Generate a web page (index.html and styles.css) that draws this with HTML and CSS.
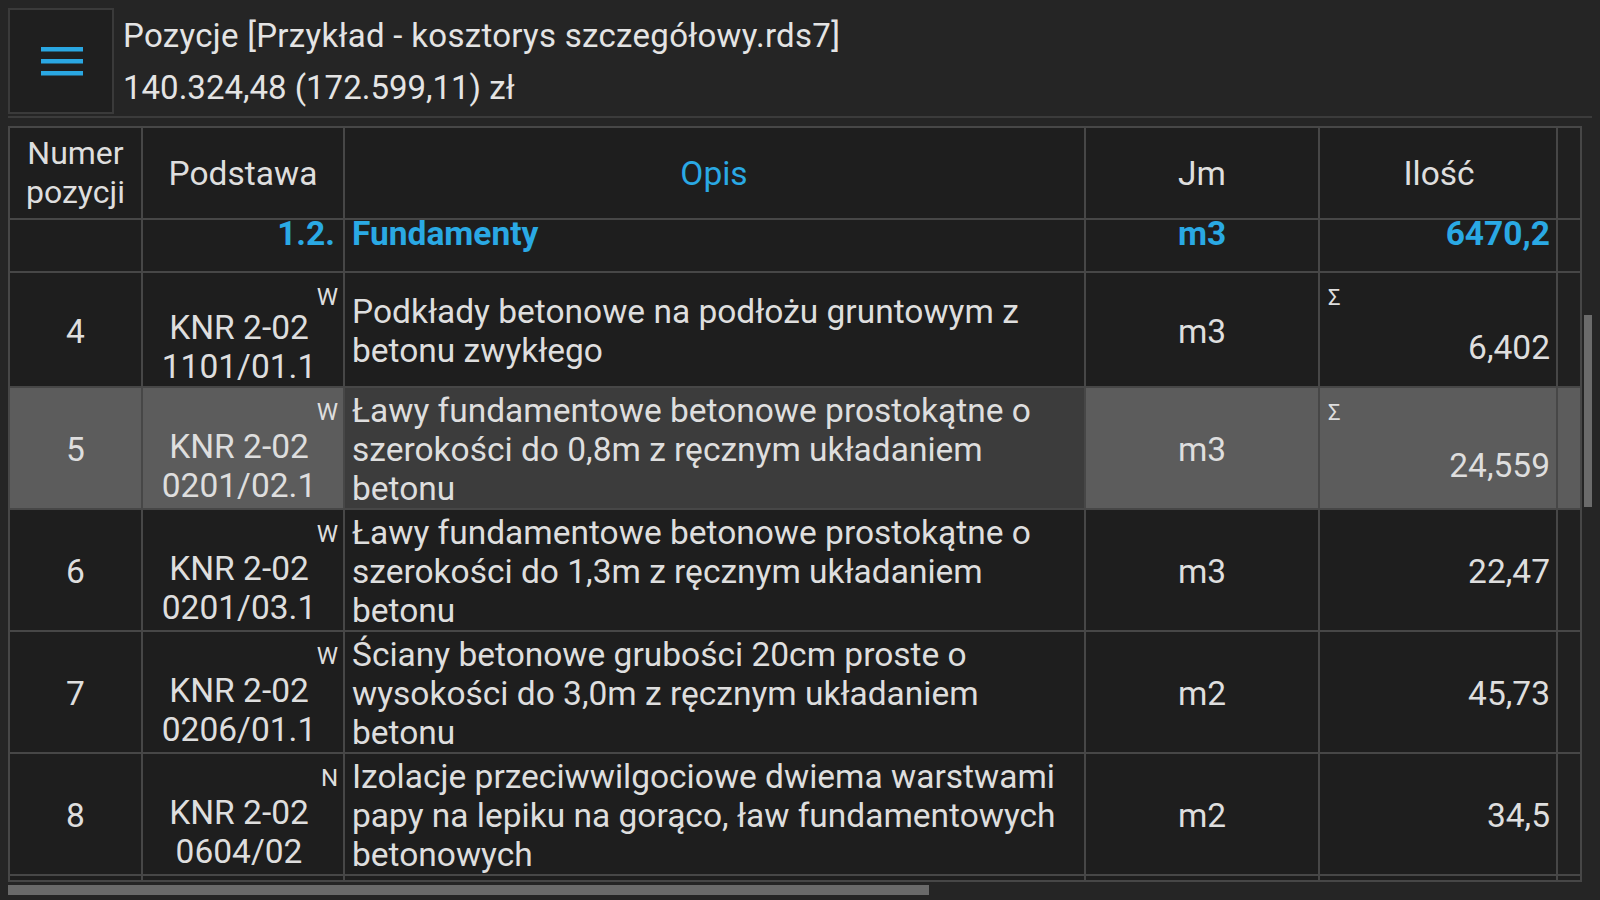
FILE: index.html
```html
<!DOCTYPE html>
<html lang="pl">
<head>
<meta charset="utf-8">
<title>Pozycje</title>
<link rel="stylesheet" href="styles.css">
</head>
<body>
<div class="screen">
  <header class="topbar">
    <div class="menu-btn">
      <svg width="44" height="34" viewBox="0 0 44 34">
        <rect x="1" y="3" width="42" height="4.5" fill="#2aa7e2"/>
        <rect x="1" y="15" width="42" height="4.5" fill="#2aa7e2"/>
        <rect x="1" y="27" width="42" height="4.5" fill="#2aa7e2"/>
      </svg>
    </div>
    <div class="title">
      <div class="title-line first">Pozycje [Przykład - kosztorys szczegółowy.rds7]</div>
      <div class="title-line second">140.324,48 (172.599,11) zł</div>
    </div>
  </header>

  <div class="table-wrap">
    <div class="table">
      <div class="row head">
        <div class="cell c-num">Numer<br>pozycji</div>
        <div class="cell c-base center">Podstawa</div>
        <div class="cell c-desc center blue">Opis</div>
        <div class="cell c-jm center">Jm</div>
        <div class="cell c-qty center">Ilość</div>
        <div class="cell c-pad"></div>
      </div>

      <div class="row group">
        <div class="cell c-num"></div>
        <div class="cell c-base right blue bold">1.2.</div>
        <div class="cell c-desc blue bold">Fundamenty</div>
        <div class="cell c-jm center blue bold">m3</div>
        <div class="cell c-qty right blue bold">6470,2</div>
        <div class="cell c-pad"></div>
      </div>

      <div class="row">
        <div class="cell c-num">4</div>
        <div class="cell c-base"><span class="mark">W</span><div class="stack"><span>KNR 2-02</span><span>1101/01.1</span></div></div>
        <div class="cell c-desc">Podkłady betonowe na podłożu gruntowym z betonu zwykłego</div>
        <div class="cell c-jm center">m3</div>
        <div class="cell c-qty"><span class="sigma">Σ</span><div class="qstack"><span class="qval">6,402</span></div></div>
        <div class="cell c-pad"></div>
      </div>

      <div class="row selected">
        <div class="cell c-num">5</div>
        <div class="cell c-base"><span class="mark">W</span><div class="stack"><span>KNR 2-02</span><span>0201/02.1</span></div></div>
        <div class="cell c-desc">Ławy fundamentowe betonowe prostokątne o szerokości do 0,8m z ręcznym układaniem betonu</div>
        <div class="cell c-jm center">m3</div>
        <div class="cell c-qty"><span class="sigma">Σ</span><div class="qstack"><span class="qval">24,559</span></div></div>
        <div class="cell c-pad"></div>
      </div>

      <div class="row">
        <div class="cell c-num">6</div>
        <div class="cell c-base"><span class="mark">W</span><div class="stack"><span>KNR 2-02</span><span>0201/03.1</span></div></div>
        <div class="cell c-desc">Ławy fundamentowe betonowe prostokątne o szerokości do 1,3m z ręcznym układaniem betonu</div>
        <div class="cell c-jm center">m3</div>
        <div class="cell c-qty right">22,47</div>
        <div class="cell c-pad"></div>
      </div>

      <div class="row">
        <div class="cell c-num">7</div>
        <div class="cell c-base"><span class="mark">W</span><div class="stack"><span>KNR 2-02</span><span>0206/01.1</span></div></div>
        <div class="cell c-desc">Ściany betonowe grubości 20cm proste o wysokości do 3,0m z ręcznym układaniem betonu</div>
        <div class="cell c-jm center">m2</div>
        <div class="cell c-qty right">45,73</div>
        <div class="cell c-pad"></div>
      </div>

      <div class="row">
        <div class="cell c-num">8</div>
        <div class="cell c-base"><span class="mark">N</span><div class="stack"><span>KNR 2-02</span><span>0604/02</span></div></div>
        <div class="cell c-desc">Izolacje przeciwwilgociowe dwiema warstwami papy na lepiku na gorąco, ław fundamentowych betonowych</div>
        <div class="cell c-jm center">m2</div>
        <div class="cell c-qty right">34,5</div>
        <div class="cell c-pad"></div>
      </div>

      <div class="row stub">
        <div class="cell c-num"></div>
        <div class="cell c-base"></div>
        <div class="cell c-desc"></div>
        <div class="cell c-jm"></div>
        <div class="cell c-qty"></div>
        <div class="cell c-pad"></div>
      </div>
    </div>
    <div class="vscroll"></div>
  </div>
  <div class="hscroll"></div>
</div>
</body>
</html>
```

FILE: styles.css
```css
html, body {
  margin: 0;
  padding: 0;
  background: #252525;
  width: 1600px;
  height: 900px;
  overflow: hidden;
  font-family: Roboto, "Noto Sans", "Liberation Sans", sans-serif;
  color: #dedede;
}

.screen {
  padding: 8px 0 0 8px;
  box-sizing: border-box;
  height: 900px;
}

.topbar {
  display: flex;
  height: 108px;
  border-bottom: 2px solid #3b3b3b;
  margin-right: 8px;
}

.menu-btn {
  width: 106px;
  height: 106px;
  box-sizing: border-box;
  border: 2px solid #3a3a3a;
  background: #1f1f1f;
  display: flex;
  align-items: center;
  justify-content: center;
  padding-left: 2px;
}

.title {
  display: flex;
  flex-direction: column;
  padding: 8px 0 0 9px;
  font-size: 33px;
  color: #e4e4e4;
}

.title-line {
  line-height: 40px;
  white-space: nowrap;
}

.title-line.first {
  letter-spacing: 0.3px;
}

.title-line.second {
  margin-top: 12px;
}

.table-wrap {
  position: relative;
  margin-top: 8px;
  width: 1592px;
}

.table {
  width: 1574px;
  border-top: 2px solid #474747;
  border-left: 2px solid #474747;
  box-sizing: border-box;
  background: #1e1e1e;
}

.row {
  display: grid;
  grid-template-columns: 133px 202px 741px 234px 238px 24px;
}

.cell {
  position: relative;
  box-sizing: border-box;
  border-right: 2px solid #474747;
  border-bottom: 2px solid #474747;
  font-size: 33.5px;
  line-height: 39px;
  padding: 3px 8px 0 8px;
  display: flex;
  align-items: center;
  min-width: 0;
}

.c-num {
  justify-content: center;
  text-align: center;
}

.c-desc {
  padding-left: 7px;
}

.c-qty {
  padding-right: 6px;
}

.center {
  justify-content: center;
  text-align: center;
}

.right {
  justify-content: flex-end;
  text-align: right;
}

.blue {
  color: #2aa9e4;
}

.bold {
  font-weight: 700;
}

.head .cell {
  height: 92px;
  padding-top: 0;
}

.head .c-num {
  font-size: 32px;
  padding: 0 4px;
}

.group .cell {
  height: 53px;
  align-items: flex-start;
  padding-top: 0;
  line-height: 27px;
}

.c-pad {
  padding: 0;
  background: #202020;
}

.stack {
  display: flex;
  flex-direction: column;
  align-items: center;
  width: 100%;
  padding: 32px 8px 0 0;
}

.mark {
  position: absolute;
  top: 12px;
  right: 5px;
  font-size: 24px;
  line-height: 24px;
}

.qstack {
  display: flex;
  flex-direction: column;
  width: 100%;
  padding-top: 32px;
}

.sigma {
  position: absolute;
  top: 14px;
  left: 8px;
  font-size: 22px;
  line-height: 22px;
}

.qval {
  align-self: flex-end;
}

.selected .cell {
  background: #5c5c5c;
}

.selected .c-desc {
  background: #3c3c3c;
}

.stub .cell {
  height: 6px;
  padding: 0;
}

.vscroll {
  position: absolute;
  left: 1576px;
  top: 189px;
  width: 8px;
  height: 192px;
  background: #6b6b6b;
}

.hscroll {
  margin-top: 3px;
  width: 921px;
  height: 10px;
  background: #6a6a6a;
}
```
